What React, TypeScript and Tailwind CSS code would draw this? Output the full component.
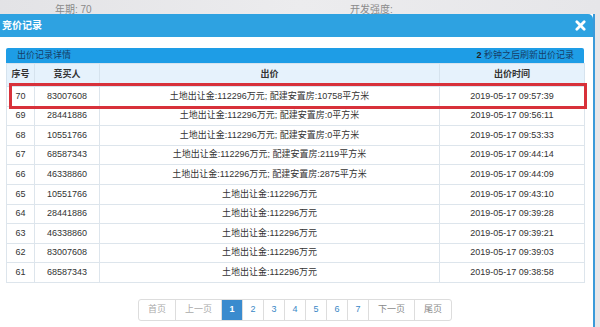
import React from 'react'

const rows = [
  { no: 70, buyer: '83007608', price: '土地出让金:112296万元; 配建安置房:10758平方米', time: '2019-05-17 09:57:39' },
  { no: 69, buyer: '28441886', price: '土地出让金:112296万元; 配建安置房:0平方米', time: '2019-05-17 09:56:11' },
  { no: 68, buyer: '10551766', price: '土地出让金:112296万元; 配建安置房:0平方米', time: '2019-05-17 09:53:33' },
  { no: 67, buyer: '68587343', price: '土地出让金:112296万元; 配建安置房:2119平方米', time: '2019-05-17 09:44:14' },
  { no: 66, buyer: '46338860', price: '土地出让金:112296万元; 配建安置房:2875平方米', time: '2019-05-17 09:44:09' },
  { no: 65, buyer: '10551766', price: '土地出让金:112296万元', time: '2019-05-17 09:43:10' },
  { no: 64, buyer: '28441886', price: '土地出让金:112296万元', time: '2019-05-17 09:39:28' },
  { no: 63, buyer: '46338860', price: '土地出让金:112296万元', time: '2019-05-17 09:39:21' },
  { no: 62, buyer: '83007608', price: '土地出让金:112296万元', time: '2019-05-17 09:39:03' },
  { no: 61, buyer: '68587343', price: '土地出让金:112296万元', time: '2019-05-17 09:38:58' },
]

const pages = ['首页', '上一页', '1', '2', '3', '4', '5', '6', '7', '下一页', '尾页']

export default function App() {
  return (
    <div className="relative w-[600px] h-[327px] overflow-hidden bg-[#e6e6e9] font-['Liberation_Sans','Noto_Sans_CJK_SC',sans-serif] text-[#333]">
      {/* backdrop page peeking above the dialog */}
      <div className="flex h-[14px] overflow-hidden bg-gradient-to-r from-[#e3e3e6] via-[#ececee] to-[#e6e6e9] text-[10px] leading-[12px] text-[#8a8a8a]">
        <div className="w-[295px] pl-[55px] pt-[4px] whitespace-nowrap">年期: 70</div>
        <div className="flex-1 pl-[55px] pt-[4px] whitespace-nowrap">开发强度:</div>
      </div>

      <div className="w-[595px] border-r-2 border-[#3a9ad9] bg-white h-[313px]">
        <div className="flex h-[23px] items-center justify-between bg-[#2ea2e1] rounded-tr-[5px] pl-[2px] pr-[7px] text-white">
          <span className="text-[10px] font-bold">竞价记录</span>
          <svg width="11" height="11" viewBox="0 0 12 12">
            <path d="M2 2 L10 10 M10 2 L2 10" stroke="white" strokeWidth="3" strokeLinecap="round" />
          </svg>
        </div>

        <div className="pl-[6px] pr-[9px] pt-[11px]">
          <div className="flex h-[15px] items-center justify-between rounded-t-[2px] bg-[#1e9de6] pl-[11px] pr-[10px] text-[9px] text-[#163e66]">
            <span>出价记录详情</span>
            <span>
              <b className="text-[#222]">2</b> 秒钟之后刷新出价记录
            </span>
          </div>

          <table className="w-[578px] table-fixed border-collapse text-[9px]">
            <colgroup>
              <col className="w-[28px]" />
              <col className="w-[65px]" />
              <col className="w-[340px]" />
              <col className="w-[145px]" />
            </colgroup>
            <thead>
              <tr className="h-[23px] bg-[#e6f2fc]">
                {['序号', '竞买人', '出价', '出价时间'].map((h) => (
                  <th key={h} className="border border-[#d6e3ee] font-bold text-center">
                    {h}
                  </th>
                ))}
              </tr>
            </thead>
            <tbody>
              {rows.map((r) => (
                <tr key={r.no} className="h-[19.6px]">
                  <td className="border border-[#dde5ec] text-center">{r.no}</td>
                  <td className="border border-[#dde5ec] text-center">{r.buyer}</td>
                  <td className="border border-[#dde5ec] text-center">{r.price}</td>
                  <td className="border border-[#dde5ec] text-center">{r.time}</td>
                </tr>
              ))}
            </tbody>
          </table>

          <div className="mt-[16px] flex justify-center">
            <div className="flex h-[22px] rounded-[3px] border border-[#dddddd] text-[9px]">
              {pages.map((p, i) => {
                const active = p === '1'
                const disabled = i < 2
                const wide = p.length > 1
                return (
                  <div
                    key={p}
                    className={
                      'flex items-center justify-center border-l border-[#dddddd] first:border-l-0 ' +
                      (wide ? 'px-[9px] ' : 'w-[21px] ') +
                      (active
                        ? 'bg-[#3a8bce] font-bold text-white'
                        : disabled
                          ? 'text-[#aaaaaa]'
                          : /\d/.test(p)
                            ? 'text-[#3a87c6]'
                            : 'text-[#888888]')
                    }
                  >
                    {p}
                  </div>
                )
              })}
            </div>
          </div>
        </div>
      </div>

      {/* highlight around the latest bid */}
      <div className="absolute left-[9px] top-[83px] h-[26px] w-[578px] border-[3px] border-[#d8313a]" />
    </div>
  )
}
